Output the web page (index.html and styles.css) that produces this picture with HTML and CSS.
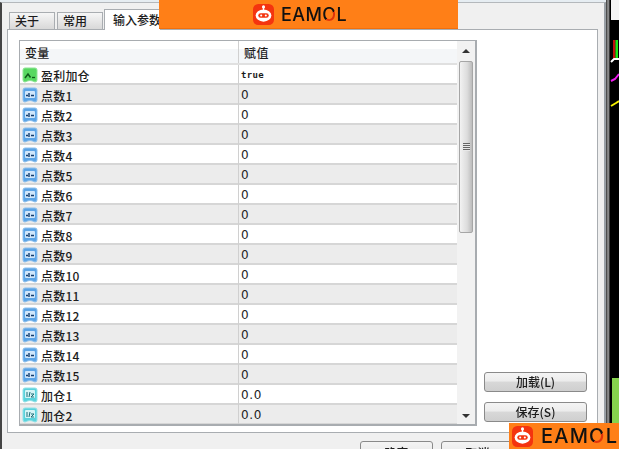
FILE: index.html
```html
<!DOCTYPE html>
<html lang="zh">
<head>
<meta charset="utf-8">
<title>输入参数</title>
<link rel="stylesheet" href="styles.css">
</head>
<body>
<svg class="defs" width="0" height="0" aria-hidden="true">
  <symbol id="i-bool" viewBox="0 0 16 16">
    <path d="M1 3q0-2 2-2h10q2 0 2 2v10q0 2-2 2-3-1.500-5-1.500T3 15q-2 0-2-2z" fill="#58d862" stroke="#8fe596"/>
    <path d="M3 11l3-4 2.500 3.500" fill="none" stroke="#0f5a1a" stroke-width="1.500"/>
    <path d="M10 10.500h3" stroke="#0f5a1a" stroke-width="1.300"/>
  </symbol>
  <symbol id="i-int" viewBox="0 0 16 16">
    <path d="M1 3q0-2 2-2h10q2 0 2 2v10q0 2-2 2-3-1.500-5-1.500T3 15q-2 0-2-2z" fill="#5ba4e6" stroke="#8fc1ee"/>
    <rect x="3" y="4" width="10" height="7" rx="1" fill="#cfe6fb"/>
    <path d="M4 8.500h2M7 6v4M9 8.500h3" stroke="#123c6e" stroke-width="1.400"/>
  </symbol>
  <symbol id="i-dbl" viewBox="0 0 16 16">
    <path d="M1 3q0-2 2-2h10q2 0 2 2v10q0 2-2 2-3-1.500-5-1.500T3 15q-2 0-2-2z" fill="#5ad2dc" stroke="#93e2e8"/>
    <rect x="3" y="3" width="10" height="8" rx="1" fill="#d4f4f6"/>
    <path d="M5 5v5M8 5l-1 5M9 7h3l-3 3h3" fill="none" stroke="#1c6f78" stroke-width="1"/>
  </symbol>
  <symbol id="i-logo" viewBox="0 0 20 20">
    <rect width="20" height="20" rx="5" fill="#f4340f"/>
    <circle cx="10" cy="2.800" r="1.500" fill="#fff"/>
    <path d="M10 3v3" stroke="#fff" stroke-width="1.200"/>
    <ellipse cx="10" cy="11" rx="7.500" ry="5.800" fill="#fff"/>
    <rect x="5" y="8.800" width="10" height="4.400" rx="2.200" fill="#f4340f"/>
    <circle cx="7.800" cy="11" r="1" fill="#fff"/>
    <circle cx="12.200" cy="11" r="1" fill="#fff"/>
  </symbol>
</svg>

<div class="screen">
  <main class="window">
    <nav class="tabs">
      <span class="tab">关于</span>
      <span class="tab">常用</span>
      <span class="tab active">输入参数</span>
    </nav>
    <section class="panel">
      <div class="grid">
        <div class="table">
          <div class="row head"><span class="c1">变量</span><span class="c2">赋值</span></div>
          <div class="row"><span class="c1"><svg class="ico"><use href="#i-bool"/></svg>盈利加仓</span><span class="c2 small">true</span></div>
          <div class="row alt"><span class="c1"><svg class="ico"><use href="#i-int"/></svg>点数1</span><span class="c2">0</span></div>
          <div class="row"><span class="c1"><svg class="ico"><use href="#i-int"/></svg>点数2</span><span class="c2">0</span></div>
          <div class="row alt"><span class="c1"><svg class="ico"><use href="#i-int"/></svg>点数3</span><span class="c2">0</span></div>
          <div class="row"><span class="c1"><svg class="ico"><use href="#i-int"/></svg>点数4</span><span class="c2">0</span></div>
          <div class="row alt"><span class="c1"><svg class="ico"><use href="#i-int"/></svg>点数5</span><span class="c2">0</span></div>
          <div class="row"><span class="c1"><svg class="ico"><use href="#i-int"/></svg>点数6</span><span class="c2">0</span></div>
          <div class="row alt"><span class="c1"><svg class="ico"><use href="#i-int"/></svg>点数7</span><span class="c2">0</span></div>
          <div class="row"><span class="c1"><svg class="ico"><use href="#i-int"/></svg>点数8</span><span class="c2">0</span></div>
          <div class="row alt"><span class="c1"><svg class="ico"><use href="#i-int"/></svg>点数9</span><span class="c2">0</span></div>
          <div class="row"><span class="c1"><svg class="ico"><use href="#i-int"/></svg>点数10</span><span class="c2">0</span></div>
          <div class="row alt"><span class="c1"><svg class="ico"><use href="#i-int"/></svg>点数11</span><span class="c2">0</span></div>
          <div class="row"><span class="c1"><svg class="ico"><use href="#i-int"/></svg>点数12</span><span class="c2">0</span></div>
          <div class="row alt"><span class="c1"><svg class="ico"><use href="#i-int"/></svg>点数13</span><span class="c2">0</span></div>
          <div class="row"><span class="c1"><svg class="ico"><use href="#i-int"/></svg>点数14</span><span class="c2">0</span></div>
          <div class="row alt"><span class="c1"><svg class="ico"><use href="#i-int"/></svg>点数15</span><span class="c2">0</span></div>
          <div class="row"><span class="c1"><svg class="ico"><use href="#i-dbl"/></svg>加仓1</span><span class="c2">0.0</span></div>
          <div class="row alt"><span class="c1"><svg class="ico"><use href="#i-dbl"/></svg>加仓2</span><span class="c2">0.0</span></div>
        </div>
        <div class="scrollbar">
          <span class="arrow up"></span>
          <div class="thumb"><span class="grip"></span></div>
          <span class="arrow down"></span>
        </div>
      </div>
      <div class="side">
        <button class="btn">加载(L)</button>
        <button class="btn">保存(S)</button>
      </div>
    </section>
    <footer class="actions">
      <button class="btn wide">确定</button>
      <button class="btn wide">取消</button>
    </footer>
  </main>
  <div class="chart">
    <svg width="13" height="449" viewBox="0 0 13 449">
      <path d="M7 40h2.500v18H7z" fill="#c01010"/>
      <path d="M9.500 40h2.500v20H9.500z" fill="#19e619"/>
      <path d="M5 62l3-3h5" fill="none" stroke="#fff" stroke-width="2"/>
      <path d="M5 81l4-2 4-5" fill="none" stroke="#f01af0" stroke-width="2"/>
      <path d="M5 106l5-3 3-2" fill="none" stroke="#f5f000" stroke-width="2"/>
      <path d="M6 378h7v71H6z" fill="#86d34e"/>
    </svg>
  </div>
  <div class="mark mark-top"><svg class="logo"><use href="#i-logo"/></svg><span>EAM<i>O</i>L</span></div>
  <div class="mark mark-corner"><svg class="logo"><use href="#i-logo"/></svg><span>EAM<i>O</i>L</span></div>
</div>
</body>
</html>
```

FILE: styles.css
```css
* { box-sizing: border-box; }
html, body { margin: 0; height: 100%; overflow: hidden; background: #000; }
.defs { position: absolute; }
.screen {
  position: relative;
  width: 619px;
  height: 449px;
  display: flex;
  overflow: hidden;
  background: #e6edf2;
  font-family: "Noto Sans CJK SC", "DejaVu Sans", sans-serif;
  font-size: 12px;
  font-weight: 500;
  color: #1c1c1c;
}
.window {
  width: 606px;
  flex: none;
  height: 447px;
  margin-top: 2px;
  padding: 0 8px 0 7px;
  background: #f0f0f0;
  border-left: 2px solid #444;
  border-right: 2px solid #9aa0a6;
  border-top: 1px solid #b4b8bc;
  display: flex;
  flex-direction: column;
  filter: blur(0.5px);
}
.tabs { display: flex; flex: none; height: 26px; align-items: flex-end; gap: 2px; }
.tab {
  width: 46px;
  height: 17px;
  padding-left: 5px;
  line-height: 16px;
  white-space: nowrap;
  border: 1px solid #a9adb1;
  border-bottom: 0;
  background: linear-gradient(#f6f6f6, #d8d8d8);
}
.tab.active {
  width: 57px;
  height: 21px;
  line-height: 20px;
  padding-left: 8px;
  background: #fff;
  margin-left: -1px;
  position: relative;
  top: 1px;
  z-index: 1;
}
.panel {
  margin-left: -2px;
  width: 591px;
  height: 404px;
  background: #fff;
  border: 1px solid #a9adb1;
  padding: 9px 10px 3px 11px;
  display: flex;
  flex: none;
}
.grid {
  width: 458px;
  height: 386px;
  margin-top: 1px;
  border: 2px solid #a8acb0;
  border-top-width: 1px;
  border-left-width: 1px;
  display: flex;
  overflow: hidden;
  flex: none;
}
.table { width: 437px; flex: none; }
.row {
  display: grid;
  grid-template-columns: 218px 1fr;
  height: 20px;
  border-bottom: 2px solid #d6d6d6;
  align-items: center;
  background: #fff;
  line-height: 19px;
  white-space: nowrap;
}
.row.alt { background: #ececec; }
.row.head { height: 24px; background: linear-gradient(#fff 0, #fff 35%, #f4f6f8 36%, #f4f6f8 100%); border-bottom: 2px solid #e0e0e0; }
.head .c1 { padding-left: 5px; }
.c1 { display: flex; align-items: center; height: 100%; padding-left: 2px; letter-spacing: 0.2px; }
.c2 {
  display: flex;
  align-items: center;
  height: 100%;
  border-left: 1px solid #d0d0d0;
  padding-left: 2px;
  padding-top: 1px;
  letter-spacing: 0.6px;
  font-family: "DejaVu Sans", "Noto Sans CJK SC", sans-serif;
}
.head .c2 { padding-left: 5px; padding-top: 0; font-family: "Noto Sans CJK SC", sans-serif; }
.small { font-size: 9px; font-weight: 700; letter-spacing: 0.3px; font-family: "DejaVu Sans Mono", monospace; }
.ico { width: 16px; height: 16px; flex: none; margin-right: 3px; }
.scrollbar {
  width: 18px;
  flex: none;
  background: #f2f2f2;
  display: flex;
  flex-direction: column;
  align-items: center;
}
.arrow { display: block; flex: none; width: 0; height: 4px; border: 4px solid transparent; }
.arrow.up { border-bottom-color: #333; border-top-width: 0; margin: 8px 0; }
.arrow.down { border-top-color: #333; border-bottom-width: 0; margin: auto 0 6px; }
.thumb {
  width: 14px;
  height: 172px;
  border: 1px solid #a6a6a6;
  border-radius: 2px;
  background: linear-gradient(90deg, #f2f2f2, #dcdcdc 60%, #bcbcbc);
  display: flex;
  align-items: center;
  justify-content: center;
}
.grip { width: 7px; height: 8px; background: repeating-linear-gradient(#666 0 1px, #e8e8e8 1px 2px); }
.side {
  flex: 1;
  display: flex;
  flex-direction: column;
  align-items: flex-end;
  justify-content: flex-end;
  gap: 10px;
  padding-bottom: 7px;
}
.btn {
  width: 103px;
  height: 20px;
  padding: 0;
  border: 1px solid #8a8a8a;
  border-radius: 3px;
  background: linear-gradient(#f4f4f4 0, #ececec 45%, #d8d8d8 50%, #cfcfcf 100%);
  font: inherit;
  color: #1c1c1c;
  line-height: 16px;
}
.actions {
  display: flex;
  justify-content: flex-end;
  gap: 8px;
  padding: 8px 82px 0 0;
}
.btn.wide { width: 73px; height: 23px; flex: none; }
.chart { flex: 1; height: 449px; background: linear-gradient(90deg, #333 0, #999 2px, #777 3px, #000 4px); position: relative; }
.chart svg { position: absolute; left: 0; top: 0; }
.chart::before { content: ""; position: absolute; left: 5px; right: 0; top: 0; height: 20px; background: #f4f4f4; }
.mark {
  position: absolute;
  background: #ff7f17;
  display: flex;
  align-items: center;
  color: #111;
  font-family: "Inter", "Liberation Sans", sans-serif;
  font-weight: 500;
  white-space: nowrap;
  filter: blur(0.3px);
}
.mark i {
  font-style: normal;
  color: transparent;
  background: linear-gradient(135deg, #111 55%, #e0340a 56%);
  -webkit-background-clip: text;
  background-clip: text;
}
.mark-top {
  left: 159px;
  top: 0;
  width: 299px;
  height: 29px;
  padding-left: 94px;
  gap: 7px;
  font-size: 18px;
  letter-spacing: 0.4px;
  border-bottom: 1px solid #f36f0a;
}
.mark-top .logo { width: 21px; height: 21px; }
.mark-corner {
  left: 509px;
  top: 423px;
  width: 110px;
  height: 26px;
  padding-left: 3px;
  gap: 8px;
  font-size: 20px;
  letter-spacing: 1.2px;
}
.mark-corner .logo { width: 21px; height: 21px; }
```
